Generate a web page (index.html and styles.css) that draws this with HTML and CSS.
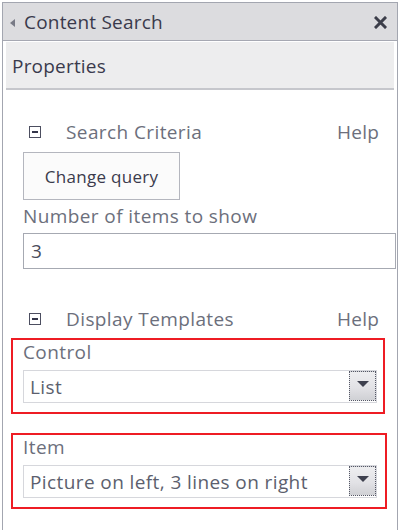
FILE: index.html
```html
<!DOCTYPE html>
<html>
<head>
<meta charset="utf-8">
<link rel="stylesheet" href="styles.css">
</head>
<body>
<div class="panel">
  <div class="titlebar">
    <span class="back-tri"></span>
    <span class="title">Content Search</span>
    <svg class="close" width="13" height="13" viewBox="0 0 13 13"><path d="M2 2 L11 11 M11 2 L2 11" stroke="#3c3e4a" stroke-width="3" stroke-linecap="square" fill="none"/></svg>
  </div>
  <div class="props">Properties</div>
  <div class="content">
    <div class="sec-head">
      <span class="minus"></span>
      <span class="sec-title">Search Criteria</span>
      <span class="help">Help</span>
    </div>
    <div class="btn">Change query</div>
    <div class="label">Number of items to show</div>
    <div class="input">3</div>

    <div class="sec-head sec2">
      <span class="minus"></span>
      <span class="sec-title">Display Templates</span>
      <span class="help">Help</span>
    </div>
    <div class="redbox">
      <div class="label">Control</div>
      <div class="select">
        <span class="sel-text">List</span>
        <span class="drop"><span class="drop-tri"></span></span>
      </div>
    </div>
    <div class="redbox redbox2">
      <div class="label">Item</div>
      <div class="select">
        <span class="sel-text">Picture on left, 3 lines on right</span>
        <span class="drop"><span class="drop-tri"></span></span>
      </div>
    </div>
  </div>
</div>
</body>
</html>
```

FILE: styles.css
```css
* { box-sizing: border-box; }
html, body { margin: 0; padding: 0; background: #ffffff; }
body {
  width: 400px;
  height: 530px;
  overflow: hidden;
  font-family: "Open Sans", "Noto Sans", sans-serif;
}
.panel {
  margin: 2px 0 0 2px;
  width: 396px;
  height: 540px;
  border: 1px solid #a3a6b0;
  border-bottom: none;
  background: #ffffff;
}
.titlebar {
  height: 38px;
  background: #dcdcdf;
  border-bottom: 1px solid #a6a8b2;
  display: flex;
  align-items: center;
  padding: 0 10px 0 7px;
}
.back-tri {
  width: 0; height: 0;
  border-top: 4px solid transparent;
  border-bottom: 4px solid transparent;
  border-right: 5px solid #787a86;
  margin-right: 9px;
  margin-top: 2px;
}
.title {
  font-size: 19px;
  color: #3a3a4c;
  flex: 1;
  letter-spacing: 0.2px;
}
.close {
  display: block;
  margin-top: 1px;
}
.props {
  margin: 1px 3px 0 3px;
  height: 48px;
  background: #ededee;
  border-bottom: 2px solid #c6c7cc;
  font-size: 19px;
  color: #3a3a4c;
  display: flex;
  align-items: center;
  padding: 1px 0 0 6px;
  letter-spacing: 0.2px;
}
.content {
  padding: 0 0 0 20px;
}
.sec-head {
  margin-top: 30px;
  height: 24px;
  display: flex;
  align-items: center;
  padding: 0 18px 0 6px;
  color: #6c6f7c;
  font-size: 19px;
  letter-spacing: 0.4px;
}
.sec2 { margin-top: 38px; }
.minus {
  width: 12px; height: 12px;
  border: 1px solid #4c4e60;
  position: relative;
  margin-right: 25px;
}
.minus::after {
  content: "";
  position: absolute;
  left: 2px; top: 4px;
  width: 6px; height: 2px;
  background: #34364a;
}
.sec-title { flex: 1; }
.help { color: #6c6f7c; letter-spacing: 0.2px; }
.btn {
  margin-top: 8px;
  width: 157px;
  height: 48px;
  border: 1px solid #b4b6be;
  background: #fbfbfb;
  display: flex;
  align-items: center;
  justify-content: center;
  font-size: 17px;
  color: #3a3a4c;
  letter-spacing: 0.3px;
}
.label {
  font-size: 19px;
  line-height: 22px;
  color: #6c6f7c;
  margin-top: 5px;
  letter-spacing: 0.4px;
}
.input {
  margin-top: 6px;
  width: 373px;
  height: 36px;
  border: 1px solid #a6a9b2;
  font-size: 19px;
  color: #4a4c5a;
  display: flex;
  align-items: center;
  padding-left: 7px;
}
.redbox {
  margin: 7px 0 0 -12px;
  width: 374px;
  height: 76px;
  border: 2px solid #ee1c24;
  padding: 1px 0 0 10px;
}
.redbox2 {
  margin-top: 19px;
  width: 376px;
}
.redbox .label { margin-top: 0; }
.select {
  margin-top: 7px;
  width: 354px;
  height: 33px;
  border: 1px solid #d6d7dc;
  display: flex;
  align-items: center;
  padding: 0 0 0 6px;
  font-size: 19px;
  color: #5c5f6e;
  letter-spacing: 0.4px;
}
.sel-text { flex: 1; }
.drop {
  width: 27px;
  height: 30px;
  margin: 0 0 1px 0;
  border: 1px dotted #555866;
  background: linear-gradient(#eeeef0 0%, #e2e2e6 55%, #cfd0d4 100%);
  display: flex;
  align-items: center;
  justify-content: center;
}
.drop-tri {
  width: 0; height: 0;
  border-left: 6px solid transparent;
  border-right: 6px solid transparent;
  border-top: 6px solid #3e404e;
  margin-bottom: 4px;
}
```
